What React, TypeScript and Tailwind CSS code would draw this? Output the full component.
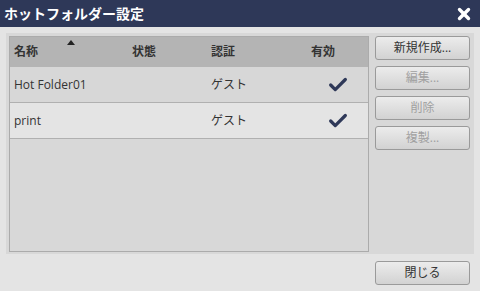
import { Check, X } from 'lucide-react';

const rows = [
  { name: 'Hot Folder01', status: '', auth: 'ゲスト', enabled: true, bg: 'bg-[#d7d7d7]' },
  { name: 'print', status: '', auth: 'ゲスト', enabled: true, bg: 'bg-[#e4e4e4]' },
];

function SideButton({ label, disabled }: { label: string; disabled?: boolean }) {
  return (
    <button
      className={`h-[24px] w-[95px] rounded-[3px] border border-[#9a9a9a] bg-gradient-to-b from-[#ececec] to-[#d2d2d2] text-[12px] leading-none ${
        disabled ? 'text-[#a0a0a0]' : 'text-[#333]'
      }`}
    >
      {label}
    </button>
  );
}

export default function App() {
  return (
    <div
      className="flex h-[291px] w-[480px] flex-col bg-[#e4e4e4]"
      style={{ fontFamily: '"Open Sans", "Noto Sans CJK JP", sans-serif' }}
    >
      {/* Title bar */}
      <div className="flex h-[27px] items-center justify-between bg-[#2e3858] pl-[4px] pr-[7px]">
        <span className="text-[14px] font-bold text-white">ホットフォルダー設定</span>
        <X className="h-[18px] w-[18px] text-white" strokeWidth={4.5} />
      </div>

      <div className="mx-[6px] mt-[6px] flex h-[221px] gap-[6px] bg-[#d8d8d8] pb-[2px] pl-[3px] pr-[4px] pt-[3px]">
        {/* Table */}
        <div className="flex w-[360px] flex-col border border-[#ababab] bg-[#d8d8d8]">
          <div className="relative grid h-[30px] grid-cols-[118px_79px_100px_1fr] items-center bg-[#b4b4b4] text-[12px] font-semibold text-[#333]">
            <span className="pl-[4px]">名称</span>
            <span className="pl-[4px]">状態</span>
            <span className="pl-[4px]">認証</span>
            <span className="pl-[4px]">有効</span>
            <div className="absolute left-[57px] top-[3px] h-0 w-0 border-x-[4px] border-b-[5px] border-x-transparent border-b-[#222]" />
          </div>
          {rows.map((r) => (
            <div
              key={r.name}
              className={`grid h-[36px] grid-cols-[118px_79px_100px_1fr] items-center border-b border-[#b0b0b0] text-[12px] text-[#333] ${r.bg}`}
            >
              <span className="pl-[4px]">{r.name}</span>
              <span className="pl-[4px]">{r.status}</span>
              <span className="pl-[4px]">{r.auth}</span>
              <span className="flex justify-center">
                {r.enabled && <Check className="h-[22px] w-[22px] text-[#2e3858]" strokeWidth={3.5} />}
              </span>
            </div>
          ))}
        </div>

        {/* Side buttons */}
        <div className="flex flex-col gap-[6px]">
          <SideButton label="新規作成..." />
          <SideButton label="編集..." disabled />
          <SideButton label="削除" disabled />
          <SideButton label="複製..." disabled />
        </div>
      </div>

      <div className="flex justify-end pr-[10px] pt-[7px]">
        <SideButton label="閉じる" />
      </div>
    </div>
  );
}
